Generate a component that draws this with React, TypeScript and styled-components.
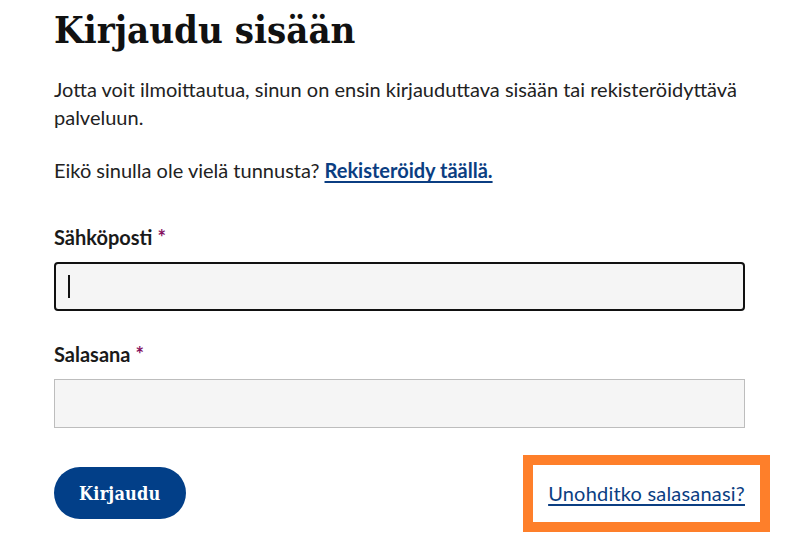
import React from "react";
import styled, { createGlobalStyle } from "styled-components";

const GlobalStyle = createGlobalStyle`
  html, body { margin: 0; padding: 0; background: #ffffff; }
  body { font-family: Lato, "Open Sans", sans-serif; color: #222222; }
`;

const Page = styled.main`
  width: 691px;
  min-height: 555px;
  padding: 0 56px 0 54px;
  box-sizing: content-box;
`;

const Title = styled.h1`
  margin: 0;
  padding-top: 6px;
  font-family: "DejaVu Serif Condensed", "DejaVu Serif", serif;
  font-weight: 700;
  font-size: 38px;
  line-height: 48px;
  color: #111111;
`;

const Text = styled.p`
  margin: 21px 0 0;
  font-size: 20px;
  line-height: 28px;
  color: #222222;
  & + & { margin-top: 25px; }
`;

const TextLink = styled.a`
  color: #0b3e82;
  font-weight: 700;
  text-decoration: underline;
  text-underline-offset: 3px;
`;

const Form = styled.form`
  display: flex;
  flex-direction: column;
  margin-top: 40px;
`;

const Field = styled.div`
  display: flex;
  flex-direction: column;
  gap: 12px;
  & + & { margin-top: 30px; }
`;

const Label = styled.label`
  font-size: 20px;
  font-weight: 700;
  line-height: 26px;
  color: #1a1a1a;
`;

const Required = styled.span`
  color: #850f5e;
  margin-left: 5px;
`;

const Input = styled.input<{ $focused?: boolean }>`
  box-sizing: border-box;
  width: 100%;
  height: 49px;
  margin: 0;
  padding: 0 14px;
  font-family: Lato, sans-serif;
  font-size: 20px;
  background: #f5f5f5;
  border: ${(p) => (p.$focused ? "2px solid #111111" : "1px solid #bdbdbd")};
  border-radius: ${(p) => (p.$focused ? "4px" : "0")};
  outline: none;
`;

const InputWrap = styled.div`
  position: relative;
`;

const Caret = styled.span`
  position: absolute;
  left: 14px;
  top: 13px;
  width: 2px;
  height: 23px;
  background: #111111;
`;

const Actions = styled.div`
  display: flex;
  align-items: center;
  justify-content: space-between;
  margin-top: 39px;
`;

const Button = styled.button`
  height: 52px;
  padding: 0 25px;
  border: none;
  border-radius: 26px;
  background: #023f88;
  color: #ffffff;
  font-family: "DejaVu Serif Condensed", "DejaVu Serif", serif;
  font-weight: 700;
  font-size: 18px;
  letter-spacing: 0.2px;
  cursor: pointer;
`;

const ForgotLink = styled.a`
  font-size: 20px;
  line-height: 27px;
  letter-spacing: 0.2px;
  color: #0b3e82;
  text-decoration: underline;
  text-underline-offset: 3px;
  outline: 10px solid #fe7f2a;
  outline-offset: 15px;
`;

export default function App() {
  return (
    <>
      <GlobalStyle />
      <Page>
        <Title>Kirjaudu sisään</Title>
        <Text>
          Jotta voit ilmoittautua, sinun on ensin kirjauduttava sisään tai rekisteröidyttävä palveluun.
        </Text>
        <Text>
          Eikö sinulla ole vielä tunnusta? <TextLink href="#">Rekisteröidy täällä.</TextLink>
        </Text>
        <Form onSubmit={(e) => e.preventDefault()}>
          <Field>
            <Label htmlFor="email">
              Sähköposti<Required>*</Required>
            </Label>
            <InputWrap>
              <Input id="email" type="email" $focused />
              <Caret />
            </InputWrap>
          </Field>
          <Field>
            <Label htmlFor="password">
              Salasana<Required>*</Required>
            </Label>
            <Input id="password" type="password" />
          </Field>
          <Actions>
            <Button type="submit">Kirjaudu</Button>
            <ForgotLink href="#">Unohditko salasanasi?</ForgotLink>
          </Actions>
        </Form>
      </Page>
    </>
  );
}
